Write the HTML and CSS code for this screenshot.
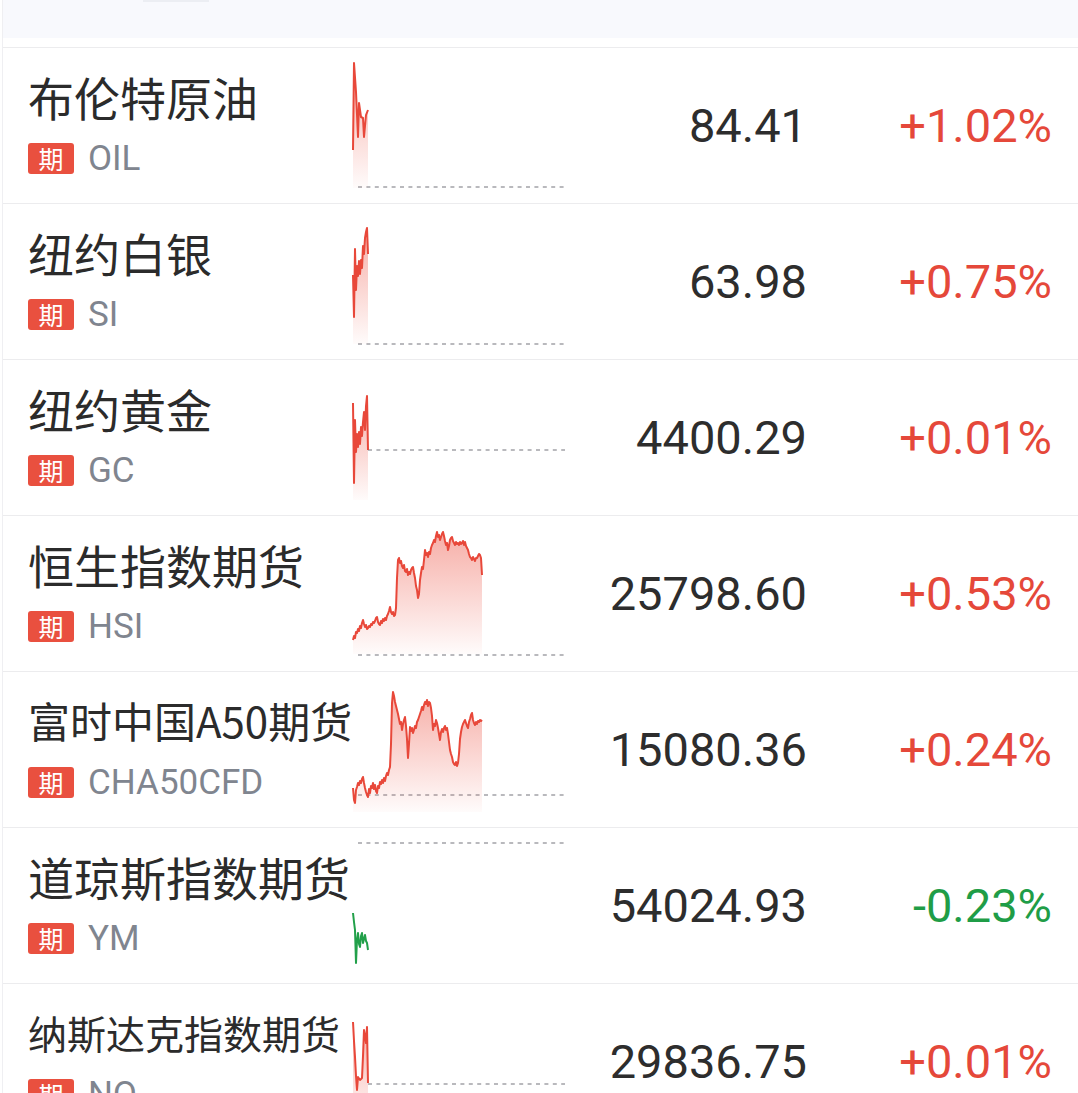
FILE: index.html
```html
<!DOCTYPE html>
<html lang="zh-CN">
<head>
    <meta charset="UTF-8">
    <meta name="viewport" content="width=device-width, initial-scale=1.0">
    <title>期货行情</title>
    <link rel="stylesheet" href="styles.css">
</head>
<body>
    <div class="page">
        <!-- 顶部标签栏 -->
        <div class="top-bar">
            <span class="tab-mark"></span>
        </div>

        <!-- 行情列表 -->
        <div class="quote-list">

            <div class="row">
                <div class="info">
                    <div class="name">布伦特原油</div>
                    <div class="code"><span class="tag">期</span><span class="sym">OIL</span></div>
                </div>
                <svg class="spark" viewBox="0 0 212 132" width="212" height="132">
                    <defs>
                        <linearGradient id="fillUp" x1="0" y1="0" x2="0" y2="1">
                            <stop offset="0" stop-color="#ec4a3a" stop-opacity="0.45"/>
                            <stop offset="1" stop-color="#ec4a3a" stop-opacity="0.02"/>
                        </linearGradient>
                    </defs>
                    <line class="base" x1="5" y1="127" x2="212" y2="127"/>
                    <path class="area" d="M0,128 L0,90 1,3 3,32 5,77 6,43 8,57 10,58 11,77 13,55 15,50 L15,128 Z"/>
                    <polyline class="line up" points="0,90 1,3 3,32 5,77 6,43 8,57 10,58 11,77 13,55 15,50"/>
                </svg>
                <div class="price">84.41</div>
                <div class="chg up">+1.02%</div>
            </div>

            <div class="row">
                <div class="info">
                    <div class="name">纽约白银</div>
                    <div class="code"><span class="tag">期</span><span class="sym">SI</span></div>
                </div>
                <svg class="spark" viewBox="0 0 212 132" width="212" height="132">
                    <line class="base" x1="5" y1="128" x2="212" y2="128"/>
                    <path class="area" d="M0,128 L0,59 1,101 2,33 3,74 4,50 5,60 6,45 7,58 8,44 9,52 10,30 11,38 12,22 13,16 14,12 15,38 L15,128 Z"/>
                    <polyline class="line up" points="0,59 1,101 2,33 3,74 4,50 5,60 6,45 7,58 8,44 9,52 10,30 11,38 12,22 13,16 14,12 15,38"/>
                </svg>
                <div class="price">63.98</div>
                <div class="chg up">+0.75%</div>
            </div>

            <div class="row">
                <div class="info">
                    <div class="name">纽约黄金</div>
                    <div class="code"><span class="tag">期</span><span class="sym">GC</span></div>
                </div>
                <svg class="spark" viewBox="0 0 212 132" width="212" height="132">
                    <line class="base" x1="15" y1="78" x2="212" y2="78"/>
                    <path class="area" d="M0,128 L0,31 1,111 2,48 3,80 4,62 5,75 6,60 7,72 8,55 9,64 10,50 11,40 12,58 13,34 14,24 15,78 L15,128 Z"/>
                    <polyline class="line up" points="0,31 1,111 2,48 3,80 4,62 5,75 6,60 7,72 8,55 9,64 10,50 11,40 12,58 13,34 14,24 15,78"/>
                </svg>
                <div class="price">4400.29</div>
                <div class="chg up">+0.01%</div>
            </div>

            <div class="row">
                <div class="info">
                    <div class="name">恒生指数期货</div>
                    <div class="code"><span class="tag">期</span><span class="sym">HSI</span></div>
                </div>
                <svg class="spark" viewBox="0 0 212 132" width="212" height="132">
                    <line class="base" x1="5" y1="127" x2="212" y2="127"/>
                    <path class="area" d="M0,126 L0,112 1,108 2,110 3,104 4,105 5,101 6,103 7,98 8,100 9,95 10,92 11,96 12,99 13,97 14,101 15,100 16,98 17,99 18,96 19,97 20,94 21,95 22,93 23,90 24,89 25,94 26,96 27,97 28,93 29,95 30,91 31,93 32,90 33,92 34,88 35,86 36,83 37,79 38,84 39,86 40,84 41,88 42,87 43,80 44,50 45,32 46,30 47,35 48,33 49,38 50,40 51,37 52,43 53,44 54,41 55,47 56,44 57,46 58,42 59,40 60,39 61,45 62,50 63,58 64,62 65,70 66,66 67,52 68,45 69,39 70,41 71,32 72,22 73,27 74,25 75,29 76,24 77,26 78,20 79,17 80,15 81,12 82,14 83,8 84,4 85,9 86,7 87,12 88,9 89,6 90,4 91,8 92,13 93,17 94,15 95,22 96,18 97,12 98,10 99,9 100,13 101,15 102,17 103,14 104,16 105,15 106,17 107,14 108,16 109,15 110,13 111,17 112,14 113,18 114,20 115,22 116,26 117,29 118,30 119,32 120,29 121,31 122,33 123,30 124,30 125,28 126,26 127,27 128,30 129,47 L129,126 Z"/>
                    <polyline class="line up" points="0,112 1,108 2,110 3,104 4,105 5,101 6,103 7,98 8,100 9,95 10,92 11,96 12,99 13,97 14,101 15,100 16,98 17,99 18,96 19,97 20,94 21,95 22,93 23,90 24,89 25,94 26,96 27,97 28,93 29,95 30,91 31,93 32,90 33,92 34,88 35,86 36,83 37,79 38,84 39,86 40,84 41,88 42,87 43,80 44,50 45,32 46,30 47,35 48,33 49,38 50,40 51,37 52,43 53,44 54,41 55,47 56,44 57,46 58,42 59,40 60,39 61,45 62,50 63,58 64,62 65,70 66,66 67,52 68,45 69,39 70,41 71,32 72,22 73,27 74,25 75,29 76,24 77,26 78,20 79,17 80,15 81,12 82,14 83,8 84,4 85,9 86,7 87,12 88,9 89,6 90,4 91,8 92,13 93,17 94,15 95,22 96,18 97,12 98,10 99,9 100,13 101,15 102,17 103,14 104,16 105,15 106,17 107,14 108,16 109,15 110,13 111,17 112,14 113,18 114,20 115,22 116,26 117,29 118,30 119,32 120,29 121,31 122,33 123,30 124,30 125,28 126,26 127,27 128,30 129,47"/>
                </svg>
                <div class="price">25798.60</div>
                <div class="chg up">+0.53%</div>
            </div>

            <div class="row">
                <div class="info">
                    <div class="name name-sm">富时中国A50期货</div>
                    <div class="code"><span class="tag">期</span><span class="sym">CHA50CFD</span></div>
                </div>
                <svg class="spark" viewBox="0 0 212 132" width="212" height="132">
                    <line class="base" x1="5" y1="111" x2="212" y2="111"/>
                    <path class="area" d="M0,128 L0,104 1,116 2,119 3,106 4,103 5,99 6,101 7,97 8,99 9,95 10,93 11,99 12,104 13,108 14,111 15,113 16,105 17,109 18,102 19,104 20,99 21,105 22,101 23,107 24,109 25,102 26,104 27,98 28,100 29,96 30,99 31,94 32,97 33,92 34,89 35,91 36,86 37,83 38,60 39,19 40,8 41,12 42,18 43,22 44,26 45,30 46,35 47,40 48,38 49,46 50,40 51,36 52,33 53,42 54,55 55,74 56,60 57,43 58,47 59,44 60,49 61,46 62,42 63,44 64,38 65,36 66,33 67,30 68,27 69,23 70,26 71,21 72,18 73,20 74,16 75,22 76,18 77,19 78,24 79,32 80,46 81,40 82,42 83,36 84,39 85,44 86,50 87,56 88,48 89,45 90,48 91,44 92,42 93,46 94,44 95,50 96,58 97,66 98,70 99,73 100,78 101,80 102,81 103,78 104,82 105,79 106,70 107,55 108,48 109,43 110,40 111,38 112,36 113,39 114,42 115,44 116,38 117,35 118,31 119,29 120,36 121,39 122,41 123,38 124,40 125,37 126,38 127,36 128,37 129,36 L129,128 Z"/>
                    <polyline class="line up" points="0,104 1,116 2,119 3,106 4,103 5,99 6,101 7,97 8,99 9,95 10,93 11,99 12,104 13,108 14,111 15,113 16,105 17,109 18,102 19,104 20,99 21,105 22,101 23,107 24,109 25,102 26,104 27,98 28,100 29,96 30,99 31,94 32,97 33,92 34,89 35,91 36,86 37,83 38,60 39,19 40,8 41,12 42,18 43,22 44,26 45,30 46,35 47,40 48,38 49,46 50,40 51,36 52,33 53,42 54,55 55,74 56,60 57,43 58,47 59,44 60,49 61,46 62,42 63,44 64,38 65,36 66,33 67,30 68,27 69,23 70,26 71,21 72,18 73,20 74,16 75,22 76,18 77,19 78,24 79,32 80,46 81,40 82,42 83,36 84,39 85,44 86,50 87,56 88,48 89,45 90,48 91,44 92,42 93,46 94,44 95,50 96,58 97,66 98,70 99,73 100,78 101,80 102,81 103,78 104,82 105,79 106,70 107,55 108,48 109,43 110,40 111,38 112,36 113,39 114,42 115,44 116,38 117,35 118,31 119,29 120,36 121,39 122,41 123,38 124,40 125,37 126,38 127,36 128,37 129,36"/>
                </svg>
                <div class="price">15080.36</div>
                <div class="chg up">+0.24%</div>
            </div>

            <div class="row">
                <div class="info">
                    <div class="name">道琼斯指数期货</div>
                    <div class="code"><span class="tag">期</span><span class="sym">YM</span></div>
                </div>
                <svg class="spark" viewBox="0 0 212 132" width="212" height="132">
                    <line class="base" x1="5" y1="3" x2="212" y2="3"/>
                    <polyline class="line down" points="0,73 1,82 2,90 3,123 4,100 5,93 6,104 7,107 8,96 9,93 10,103 11,99 12,95 13,101 14,103 15,110"/>
                </svg>
                <div class="price">54024.93</div>
                <div class="chg down">-0.23%</div>
            </div>

            <div class="row">
                <div class="info">
                    <div class="name name-xs">纳斯达克指数期货</div>
                    <div class="code"><span class="tag">期</span><span class="sym">NQ</span></div>
                </div>
                <svg class="spark" viewBox="0 0 212 132" width="212" height="132">
                    <line class="base" x1="15" y1="88" x2="212" y2="88"/>
                    <path class="area" d="M0,128 L0,26 1,45 2,61 3,80 4,94 5,81 7,84 9,82 10,60 11,34 12,40 13,47 14,31 15,87 L15,128 Z"/>
                    <polyline class="line up" points="0,26 1,45 2,61 3,80 4,94 5,81 7,84 9,82 10,60 11,34 12,40 13,47 14,31 15,87"/>
                </svg>
                <div class="price">29836.75</div>
                <div class="chg up">+0.01%</div>
            </div>

        </div>
    </div>
</body>
</html>
```

FILE: styles.css
```css
/* 页面基础 */
body {
    margin: 0;
    background: #ffffff;
    font-family: "Noto Sans CJK SC", "Noto Sans", sans-serif;
    color: #2b2b2b;
}

.page {
    margin-left: 2px;
    border-left: 1px solid #efeff2;
    min-height: 1093px;
}

/* 顶部标签栏 */
.top-bar {
    height: 38px;
    background: #f8f9fd;
    margin-bottom: 9px;
    padding-left: 140px;
}

.tab-mark {
    display: block;
    width: 66px;
    height: 2px;
    background: #eceef3;
}

/* 行情列表 */
.quote-list {
    border-top: 1px solid #ececee;
}

.row {
    display: grid;
    grid-template-columns: 320px 212px 1fr 245px;
    height: 155px;
    padding: 0 26px 0 25px;
    border-bottom: 1px solid #ececee;
    align-items: center;
    overflow: hidden;
}

.info {
    align-self: start;
    padding-top: 20px;
    white-space: nowrap;
}

.name {
    font-size: 46px;
    line-height: 56px;
    color: #2b2b2b;
}

.name-sm {
    font-size: 42px;
}

.name-xs {
    font-size: 39px;
}

.code {
    display: flex;
    align-items: center;
    margin-top: 19px;
    height: 31px;
}

.tag {
    display: inline-flex;
    align-items: center;
    justify-content: center;
    width: 46px;
    height: 31px;
    border-radius: 3px;
    background: #e9503f;
    color: #ffffff;
    font-size: 25px;
    line-height: 1;
    margin-right: 14px;
}

.sym {
    font-family: "Roboto", "Noto Sans", sans-serif;
    font-size: 35px;
    color: #80858f;
}

/* 分时小图 */
.spark {
    align-self: start;
    margin-top: 12px;
    margin-left: 5px;
    display: block;
    overflow: visible;
}

.spark .base {
    stroke: #a3a3a8;
    stroke-width: 1.5;
    stroke-dasharray: 4 4.4;
}

.spark .area {
    fill: url(#fillUp);
    stroke: none;
}

.spark .line {
    fill: none;
    stroke-width: 2;
    stroke-linejoin: round;
}

.spark .line.up {
    stroke: #e8483a;
}

.spark .line.down {
    stroke: #22a04a;
}

/* 价格与涨跌 */
.price,
.chg {
    font-family: "Roboto", "Noto Sans", sans-serif;
    font-size: 47px;
    text-align: right;
    white-space: nowrap;
}

.price {
    color: #2d2d2d;
}

.chg.up {
    color: #e5483a;
}

.chg.down {
    color: #1f9d47;
}
```
